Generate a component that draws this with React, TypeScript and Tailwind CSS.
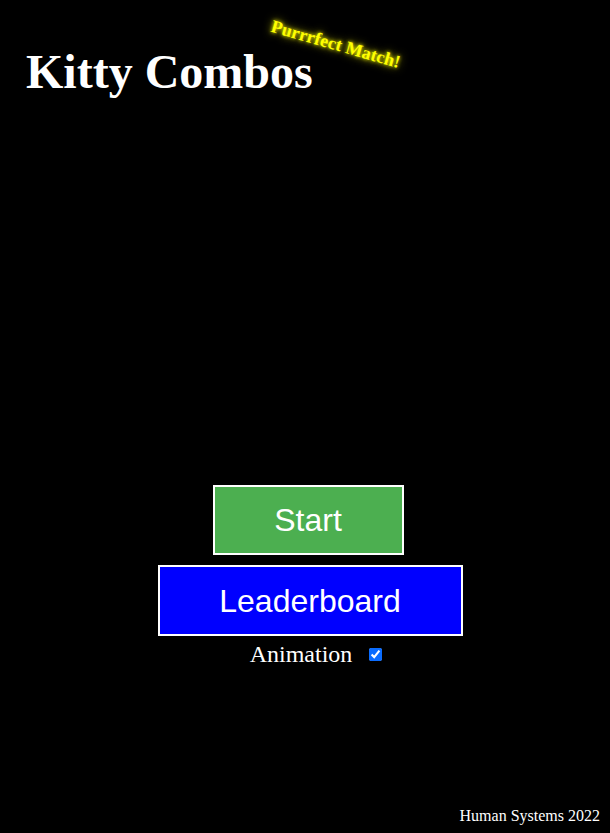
export default function App() {
  return (
    <div className="relative flex min-h-[833px] w-full flex-col bg-black text-white">
      <header className="relative px-[26px] pt-[44px]">
        <h1 className="font-['Liberation_Serif',serif] text-[48px] font-bold leading-[56px]">Kitty Combos</h1>
        <span
          className="absolute left-[269px] top-[31px] rotate-[16deg] whitespace-nowrap font-['Liberation_Serif',serif] text-[18px] font-bold text-[#ffff00]"
          style={{ textShadow: "0 0 4px #ffff00, 0 0 8px #cccc00" }}
        >
          Purrrfect Match!
        </span>
      </header>

      <main className="mt-[385px] flex flex-col items-center pl-[6px]">
        <button className="h-[70px] w-[191px] border-2 border-white bg-[#4caf50] font-['Liberation_Sans',sans-serif] text-[32px] text-white">
          Start
        </button>
        <button className="ml-[4px] mt-[10px] h-[71px] w-[305px] border-2 border-white bg-[#0000ff] font-['Liberation_Sans',sans-serif] text-[32px] text-white">
          Leaderboard
        </button>
        <label className="ml-[16px] mt-[2px] flex items-center gap-[17px] font-['Liberation_Serif',serif] text-[24px] leading-[32px]">
          Animation
          <input type="checkbox" defaultChecked className="h-[13px] w-[13px] accent-[#0a6cff]" />
        </label>
      </main>

      <footer className="mt-auto px-[10px] pb-[5px] text-right font-['Liberation_Serif',serif] text-[16px]">
        Human Systems 2022
      </footer>
    </div>
  );
}
